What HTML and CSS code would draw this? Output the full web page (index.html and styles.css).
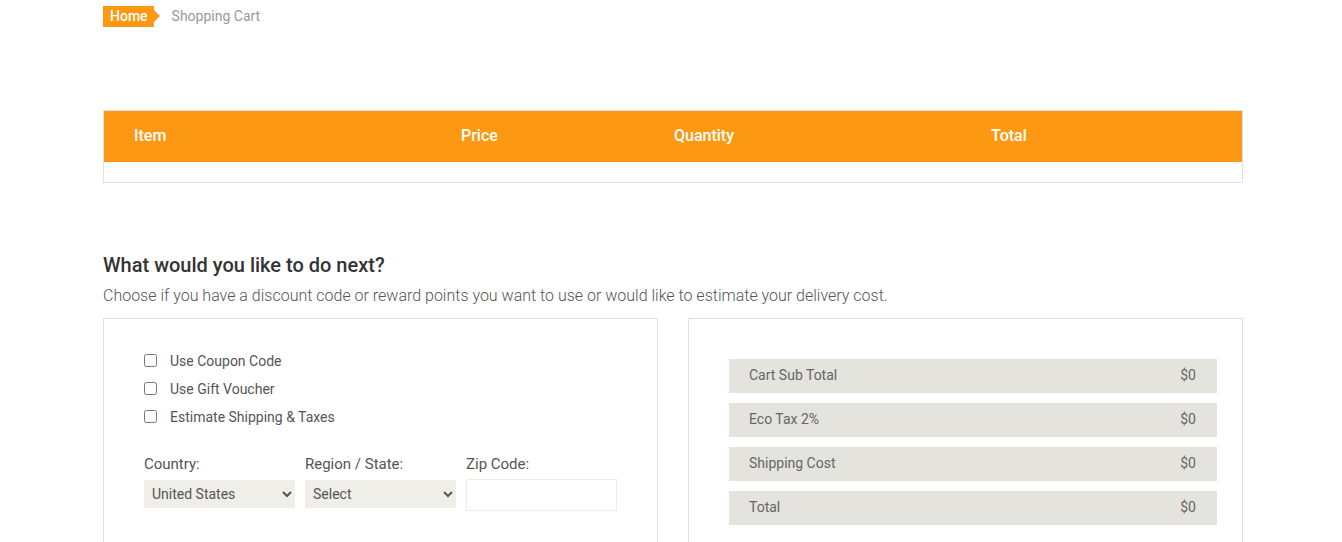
FILE: index.html
```html
<!DOCTYPE html>
<html>
<head>
<meta charset="utf-8">
<link rel="stylesheet" href="styles.css">
</head>
<body>
<div class="container">
  <div class="breadcrumb">
    <a class="crumb-home">Home</a>
    <span class="crumb-current">Shopping Cart</span>
  </div>

  <div class="cart-table">
    <div class="cart-head">
      <div class="col col-item">Item</div>
      <div class="col col-price">Price</div>
      <div class="col col-qty">Quantity</div>
      <div class="col col-total">Total</div>
    </div>
    <div class="cart-body"></div>
  </div>

  <h2 class="next-title">What would you like to do next?</h2>
  <p class="next-desc">Choose if you have a discount code or reward points you want to use or would like to estimate your delivery cost.</p>

  <div class="panels">
    <div class="panel panel-left">
      <label class="check"><input type="checkbox"><span>Use Coupon Code</span></label>
      <label class="check"><input type="checkbox"><span>Use Gift Voucher</span></label>
      <label class="check"><input type="checkbox"><span>Estimate Shipping &amp; Taxes</span></label>
      <div class="fields">
        <div class="field">
          <div class="field-label">Country:</div>
          <select class="select"><option>United States</option></select>
        </div>
        <div class="field">
          <div class="field-label">Region / State:</div>
          <select class="select"><option>Select</option></select>
        </div>
        <div class="field">
          <div class="field-label">Zip Code:</div>
          <input class="input" type="text">
        </div>
      </div>
    </div>
    <div class="panel panel-right">
      <div class="sum-row"><span>Cart Sub Total</span><span>$0</span></div>
      <div class="sum-row"><span>Eco Tax 2%</span><span>$0</span></div>
      <div class="sum-row"><span>Shipping Cost</span><span>$0</span></div>
      <div class="sum-row"><span>Total</span><span>$0</span></div>
    </div>
  </div>
</div>
</body>
</html>
```
FILE: styles.css
```css
* { box-sizing: border-box; }
html, body { margin: 0; padding: 0; background: #fff; }
body { font-family: Roboto, "Open Sans", Arial, sans-serif; color: #555; }

.container { width: 1140px; margin-left: 103px; }

.breadcrumb { display: flex; align-items: center; height: 21px; margin-top: 6px; }
.crumb-home {
  position: relative;
  background: #fd9812;
  color: #fff;
  font-size: 14px;
  font-weight: 500;
  height: 21px;
  line-height: 21px;
  padding: 0 6px 0 7px;
}
.crumb-home::after {
  content: "";
  position: absolute;
  right: -6px;
  top: 4px;
  border-left: 6px solid #fd9812;
  border-top: 6px solid transparent;
  border-bottom: 6px solid transparent;
}
.crumb-current { color: #999; font-size: 14px; margin-left: 18px; margin-top: -1px; }

.cart-table { margin-top: 83px; border: 1px solid #e2e2dc; }
.cart-head {
  display: grid;
  grid-template-columns: 327px 213px 317px 1fr;
  background: #fd9812;
  height: 51px;
  align-items: center;
}
.col { color: #fff; font-size: 16px; font-weight: 500; padding-left: 30px; margin-top: -3px; }
.cart-body { height: 20px; }

.next-title { margin: 70px 0 0; font-size: 20px; font-weight: 500; color: #333; line-height: 24px; }
.next-desc { margin: 9px 0 0; font-size: 16px; font-weight: 300; color: #555; line-height: 20px; }

.panels { display: flex; gap: 30px; margin-top: 12px; }
.panel { width: 555px; height: 240px; border: 1px solid #e2e2dc; border-bottom: none; }
.panel-left { padding: 28px 40px 0 40px; }
.check { display: flex; align-items: center; height: 28px; font-size: 14px; color: #555; }
.check input { margin: 0 13px 0 0; width: 13px; height: 13px; position: relative; top: -1px; }

.fields { display: flex; gap: 10px; margin-top: 23px; }
.field { width: 151px; }
.field-label { font-size: 15px; color: #555; height: 20px; line-height: 20px; margin-bottom: 6px; }
.select {
  width: 151px; height: 28px; background: #efeee8; border: none; color: #555;
  font-family: Roboto, sans-serif; font-size: 14px; padding: 0 4px; border-radius: 0;
}
.input { width: 151px; height: 32px; border: 1px solid #eeede7; margin-top: -1px; display: block; }

.panel-right { padding: 40px 25px 0 40px; display: flex; flex-direction: column; gap: 10px; }
.sum-row {
  display: flex; justify-content: space-between; align-items: center;
  height: 34px; background: #e4e3de; padding: 0 21px 0 20px; font-size: 14px; color: #666;
  margin-top: 0;
}
.sum-row span { position: relative; top: -1px; }
```
